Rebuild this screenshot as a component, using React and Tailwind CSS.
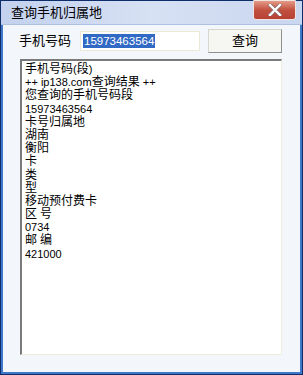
import React from 'react';

const lines = [
  '手机号码(段)',
  '++ ip138.com查询结果 ++',
  '您查询的手机号码段',
  '15973463564',
  '卡号归属地',
  '湖南',
  '衡阳',
  '卡',
  '类',
  '型',
  '移动预付费卡',
  '区 号',
  '0734',
  '邮 编',
  '421000',
];

const font = { fontFamily: '"Liberation Sans", "Noto Sans CJK SC", sans-serif' };

// latin runs are drawn a bit smaller, like the Tahoma/SimSun mix of the original
const Line = ({ text }) => {
  const parts = text.split(/([\u4e00-\u9fff]+)/).filter(Boolean);
  return (
    <div className="h-[13.2px] leading-[13.2px] text-black whitespace-pre flex items-baseline">
      {parts.map((p, i) =>
        /[\u4e00-\u9fff]/.test(p)
          ? <span key={i} className="text-[12px]">{p}</span>
          : <span key={i} className="text-[11px]">{p}</span>
      )}
    </div>
  );
};

const App = () => (
  <div className="w-[303px] h-[375px] flex flex-col bg-[#0d2d6b] p-px" style={font}>
    <div className="flex-1 flex flex-col border-x-2 border-b-2 border-[#3f77c9] bg-[#f3f6fb]">
      {/* title bar */}
      <div className="h-[24px] -mx-[2px] flex items-start justify-between bg-gradient-to-r from-[#c3d1ee] via-[#d7e1f4] to-[#c9d6ef] border-b border-[#aebfdf]">
        <span className="pl-[10px] pt-[5px] text-[13px] leading-[14px] text-black">查询手机归属地</span>
        <div className="mr-[6px] -mt-px w-[43px] h-[20px] rounded-b-[3px] border border-[#f3e4e0] bg-gradient-to-b from-[#e49a88] via-[#c2503f] to-[#b64234] flex items-center justify-center">
          <svg width="14" height="12" viewBox="0 0 14 12">
            <path d="M2 1 L12 11 M12 1 L2 11" stroke="#8a6a66" strokeWidth="4" strokeLinecap="square" />
            <path d="M2 1 L12 11 M12 1 L2 11" stroke="#ffffff" strokeWidth="2.4" strokeLinecap="square" />
          </svg>
        </div>
      </div>

      {/* query row */}
      <div className="flex items-center h-[28px] mt-[2px] pl-[16px]">
        <span className="w-[61px] text-[13px] leading-[14px] text-black">手机号码</span>
        <div className="w-[120px] h-[20px] border border-[#ebe8d8] bg-white flex items-center pl-[2px]">
          <span className="bg-[#316ac5] text-white text-[11.5px] leading-[14px] px-px">15973463564</span>
        </div>
        <button className="ml-[8px] w-[74px] h-[24px] border border-[#d8d7cf] border-r-[#8f8f8f] border-b-[#8f8f8f] bg-[#f6f6f2] text-[13px] text-black flex items-center justify-center">
          查询
        </button>
      </div>

      {/* result box */}
      <div className="mt-[4px] ml-[17px] w-[262px] h-[296px] border-l-2 border-t-2 border-[#7a7a7a] border-r border-b border-r-[#efedde] border-b-[#efedde] bg-white pl-[3px] pt-[2px]">
        {lines.map((l, i) => <Line key={i} text={l} />)}
      </div>
    </div>
  </div>
);

export default App;
